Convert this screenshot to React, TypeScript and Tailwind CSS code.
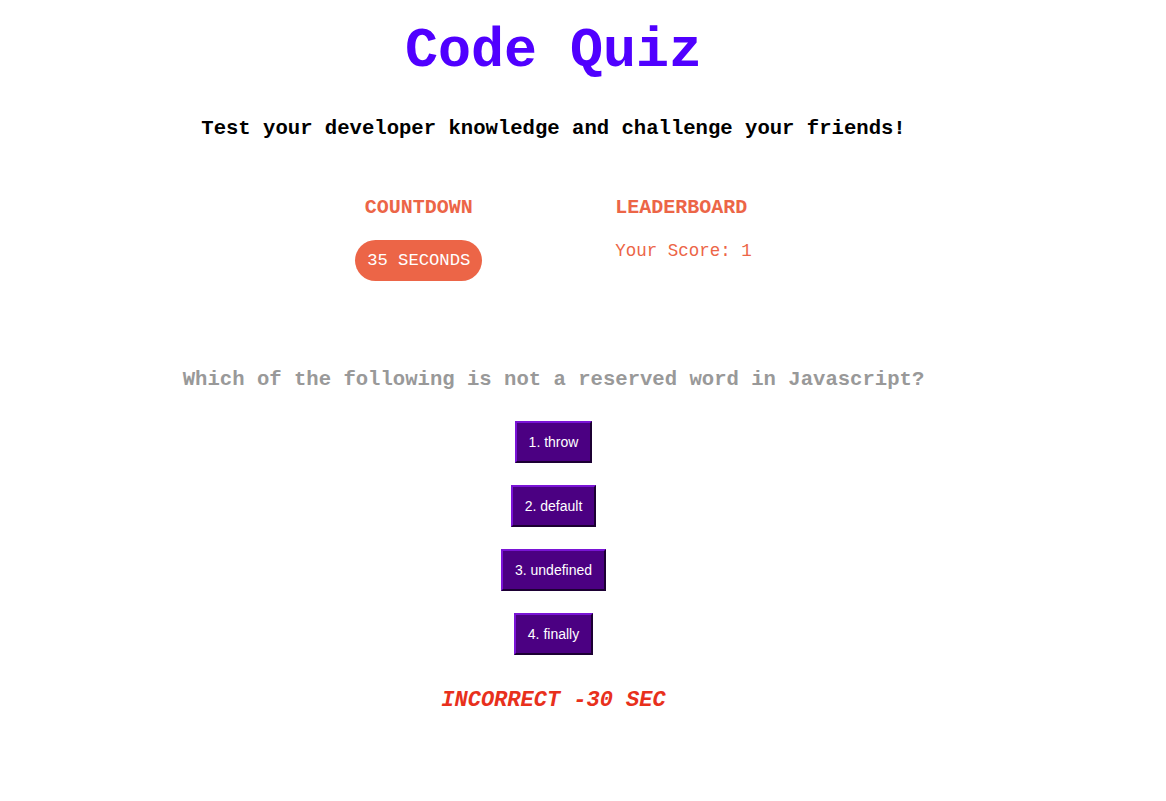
const ANSWERS = ["1. throw", "2. default", "3. undefined", "4. finally"];

export default function App() {
  return (
    <div className="min-h-screen bg-white">
      <div className="w-[1107px] text-center font-['Liberation_Mono','Courier_New',monospace]">
        {/* Header */}
        <h1 className="pt-[20px] text-[55px] leading-[64px] font-bold text-[#5000ff]">Code Quiz</h1>
        <p className="mt-[33px] text-[20.6px] leading-[24px] font-bold text-black">
          Test your developer knowledge and challenge your friends!
        </p>

        {/* Timer + score */}
        <div className="mt-[55px] flex justify-center gap-[133px]">
          <div className="flex flex-col items-center w-[127px]">
            <h3 className="text-[20px] leading-[24px] font-bold text-[#ec6547]">COUNTDOWN</h3>
            <div className="mt-[20px] h-[41px] w-[127px] rounded-full bg-[#ec6547] flex items-center justify-center text-[17.2px] text-white">
              35 SECONDS
            </div>
          </div>
          <div className="flex flex-col items-start">
            <h3 className="text-[20px] leading-[24px] font-bold text-[#ec6547]">LEADERBOARD</h3>
            <p className="mt-[20px] text-[17.5px] leading-[22px] text-[#ec6547]">Your Score: 1</p>
          </div>
        </div>

        {/* Question */}
        <h2 className="mt-[87px] text-[20.6px] leading-[24px] font-bold text-[#999999]">
          Which of the following is not a reserved word in Javascript?
        </h2>
        <div className="mt-[29px] flex flex-col items-center gap-[22px]">
          {ANSWERS.map((a) => (
            <button
              key={a}
              className="h-[42px] px-[12px] bg-[#4b0082] text-white text-[14px] font-['Liberation_Sans',Arial,sans-serif] border-2 border-t-[#7a14d6] border-l-[#7a14d6] border-b-[#1c0033] border-r-[#1c0033]"
            >
              {a}
            </button>
          ))}
        </div>

        <p className="mt-[32px] text-[22px] leading-[28px] font-bold italic text-[#e8301c]">INCORRECT -30 SEC</p>
      </div>
    </div>
  );
}
